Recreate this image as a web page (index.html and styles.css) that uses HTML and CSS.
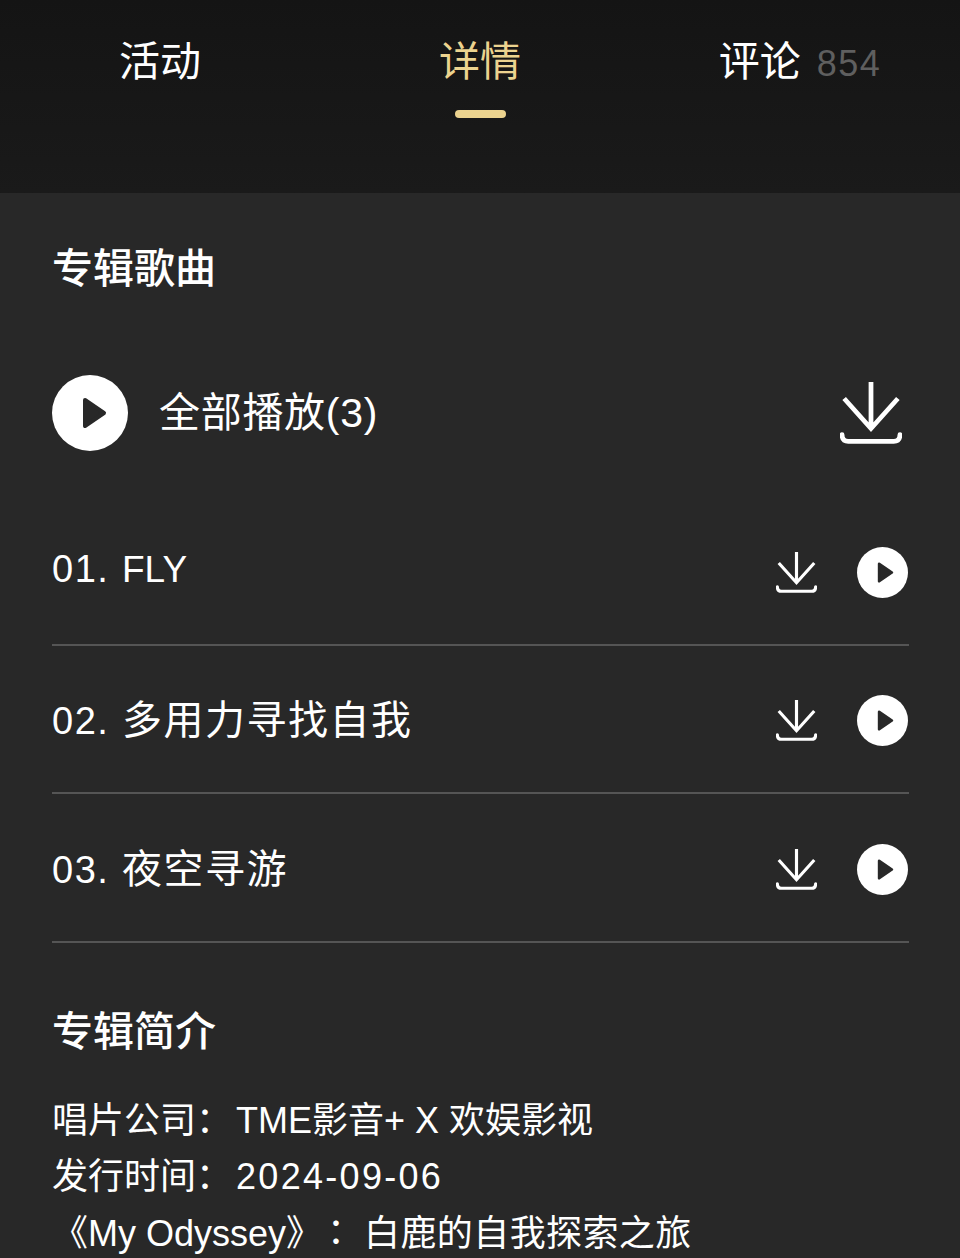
FILE: index.html
```html
<!DOCTYPE html>
<html lang="zh-CN">
<head>
  <meta charset="UTF-8">
  <title>专辑详情</title>
  <link rel="stylesheet" href="styles.css">
</head>
<body>
  <svg class="defs" width="0" height="0">
    <symbol id="dl" viewBox="0 0 60 60">
      <path d="M30 0V45M4 16L30 45L56 16" fill="none" stroke="#fff" stroke-width="4.6"/>
      <path d="M2 51C2 55 4 57.500 8 57.500H52C56 57.500 58 55 58 51" fill="none" stroke="#fff" stroke-width="4.6" stroke-linecap="round"/>
    </symbol>
    <symbol id="play" viewBox="0 0 76 76">
      <circle cx="38" cy="38" r="38" fill="#fff"/>
      <path d="M33 25L52 38L33 51Z" fill="#282828" stroke="#282828" stroke-width="4" stroke-linejoin="round"/>
    </symbol>
  </svg>

  <nav class="tabs">
    <div class="tab">活动</div>
    <div class="tab active">详情</div>
    <div class="tab">评论<span class="count">854</span></div>
  </nav>

  <main class="content">
    <h2 class="title">专辑歌曲</h2>

    <div class="play-all">
      <svg class="play-big"><use href="#play"/></svg>
      <span class="play-all-text">全部播放(3)</span>
      <svg class="dl-big"><use href="#dl"/></svg>
    </div>

    <div class="song">
      <span class="song-name"><span class="num">01.</span> <span class="latin">FLY</span></span>
      <svg class="dl"><use href="#dl"/></svg>
      <svg class="play"><use href="#play"/></svg>
    </div>
    <div class="song">
      <span class="song-name"><span class="num">02.</span> 多用力寻找自我</span>
      <svg class="dl"><use href="#dl"/></svg>
      <svg class="play"><use href="#play"/></svg>
    </div>
    <div class="song">
      <span class="song-name"><span class="num">03.</span> 夜空寻游</span>
      <svg class="dl"><use href="#dl"/></svg>
      <svg class="play"><use href="#play"/></svg>
    </div>

    <h2 class="title intro-title">专辑简介</h2>
    <p class="intro">唱片公司<span class="colon">：</span>TME影音+ X 欢娱影视</p>
    <p class="intro">发行时间<span class="colon">：</span><span class="date">2024-09-06</span></p>
    <p class="intro">《My Odyssey》<span class="colon colon-wide">：</span><span class="intro-tail">白鹿的自我探索之旅</span></p>
  </main>
</body>
</html>
```

FILE: styles.css
```css
* {
  box-sizing: border-box;
}

body {
  margin: 0;
  height: 1258px;
  overflow: hidden;
  background-color: #282828;
  color: #fff;
  font-family: "Liberation Sans", "Noto Sans CJK SC", sans-serif;
}

.defs {
  display: block;
  height: 0;
}

.tabs {
  display: flex;
  height: 193px;
  background: linear-gradient(#141414, #1a1a1a);
}

.tab {
  position: relative;
  width: 320px;
  padding-top: 34px;
  height: 118px;
  text-align: center;
  font-size: 41px;
  line-height: 56px;
}

.tab.active {
  color: #ecd38f;
}

.tab.active::after {
  content: "";
  position: absolute;
  left: 135px;
  bottom: 0;
  width: 51px;
  height: 8px;
  border-radius: 4px;
  background-color: #ecd38f;
}

.count {
  margin-left: 16px;
  font-size: 36px;
  color: #5f5f5f;
  letter-spacing: 1.500px;
}

.content {
  padding: 0 51px 0 52px;
}

.title {
  margin: 0;
  padding-top: 50px;
  font-size: 41px;
  line-height: 52px;
  font-weight: 500;
}

.play-all {
  display: flex;
  align-items: center;
  margin-top: 80px;
  height: 76px;
}

.play-big {
  width: 76px;
  height: 76px;
  flex: none;
}

.play-all-text {
  margin-left: 31px;
  padding-bottom: 8px;
  font-size: 41px;
  letter-spacing: 0.700px;
  flex: 1;
}

.dl-big {
  width: 62px;
  height: 62px;
  margin-right: 7px;
}

.song {
  display: flex;
  align-items: center;
  height: 148.5px;
  border-bottom: 2px solid #555;
}

.play-all + .song {
  margin-top: 46px;
}

.song-name {
  flex: 1;
  padding-bottom: 3px;
  font-size: 40px;
  letter-spacing: 1.500px;
}

.num {
  font-size: 38px;
  letter-spacing: 1.500px;
}

.latin {
  font-size: 37px;
  letter-spacing: 0;
}

.dl {
  width: 41px;
  height: 41px;
  margin-top: 4px;
}

.play {
  width: 51px;
  height: 51px;
  margin: 4px 1px 0 40px;
}

.intro-title {
  padding-top: 63px;
  margin-bottom: 35px;
}

.intro {
  margin: 0;
  font-size: 36px;
  line-height: 56.5px;
}

.colon {
  font-family: "Noto Sans CJK TC", sans-serif;
  line-height: 0;
  margin-right: 4px;
}

.colon-wide {
  margin-left: 14px;
  margin-right: 10px;
}

.date {
  letter-spacing: 2.300px;
}

.intro-tail {
  letter-spacing: 0.400px;
}
```
